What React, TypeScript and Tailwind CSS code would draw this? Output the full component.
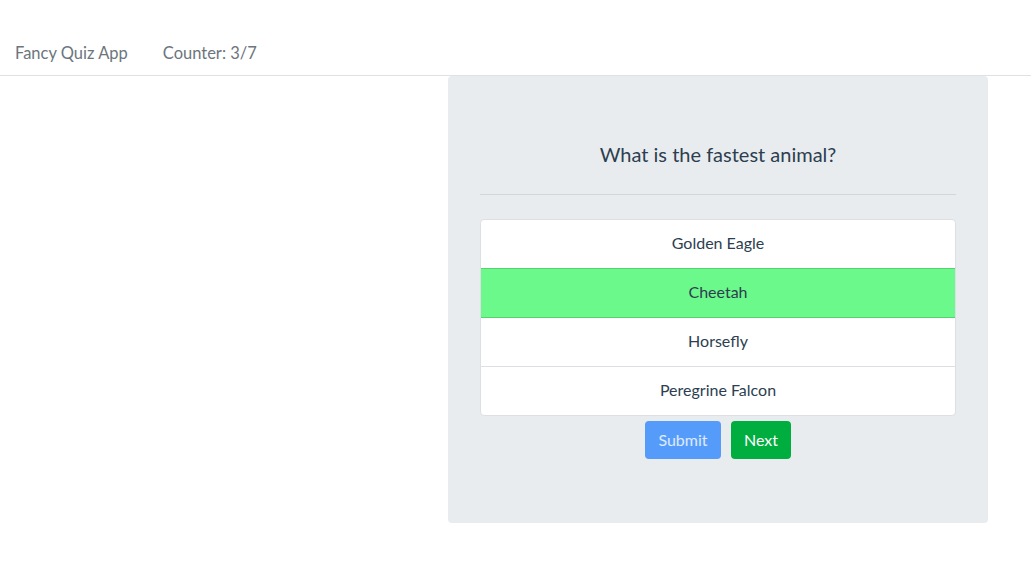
const answers = ["Golden Eagle", "Cheetah", "Horsefly", "Peregrine Falcon"];

export default function App() {
  const selected = 1;

  return (
    <div className="min-h-[566px] bg-white text-[#2c3e50]" style={{ fontFamily: "Lato, 'Noto Sans', sans-serif" }}>
      <nav className="flex h-[76px] items-end gap-[35px] border-b border-[#dee2e6] pb-[10px] pl-[15px] text-[16.5px] leading-[24px] text-[#6c757d]">
        <span>Fancy Quiz App</span>
        <span>Counter: 3/7</span>
      </nav>

      <div className="ml-[448px] w-[540px] rounded-[4px] bg-[#e9ecef] px-[32px] pb-[64px] pt-[64px]">
        <p className="pb-[2px] text-center text-[20px] leading-[28px] text-[#2c3e50]">What is the fastest animal?</p>
        <hr className="mt-[24px] mb-[24px] border-t border-[#d2d6dc]" />

        <ul className="overflow-hidden rounded-[4px] border border-[#dcdfe3] bg-white">
          {answers.map((a, i) => (
            <li
              key={a}
              className={`flex items-center justify-center pb-[2px] text-[16px] ${
                i === 0
                  ? "h-[48px]"
                  : i === selected
                  ? "h-[49px] border-t border-[#55d36f] bg-[#6cf98b]"
                  : i === selected + 1
                  ? "h-[49px] border-t border-[#55d36f]"
                  : "h-[49px] border-t border-[#dcdfe3]"
              }`}
            >
              {a}
            </li>
          ))}
        </ul>

        <div className="mt-[5px] flex justify-center gap-[10px]">
          <button className="h-[38px] w-[76px] rounded-[4px] bg-[#559bfa] pb-[1px] text-[16px] text-white/80">Submit</button>
          <button className="h-[38px] w-[60px] rounded-[4px] bg-[#00ad3f] pb-[1px] text-[16px] text-white">Next</button>
        </div>
      </div>
    </div>
  );
}
